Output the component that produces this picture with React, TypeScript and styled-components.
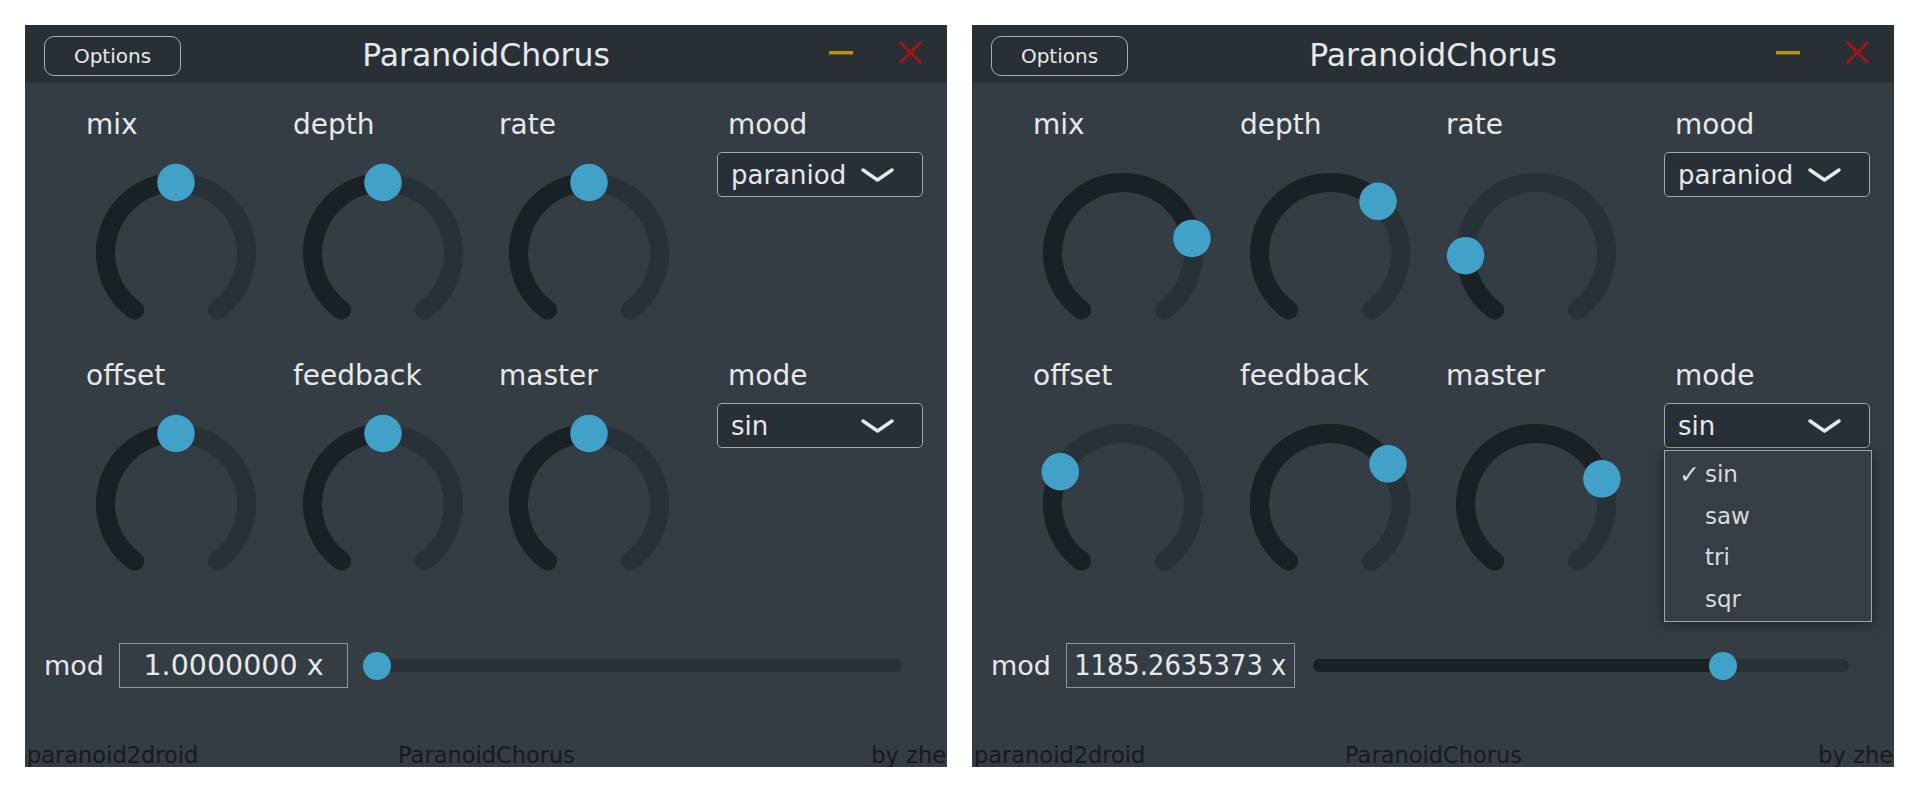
import React from 'react';
import styled, { createGlobalStyle } from 'styled-components';

const GlobalStyle = createGlobalStyle`
  html, body {
    margin: 0;
    padding: 0;
    background: #ffffff;
  }
  body {
    font-family: "DejaVu Sans", "Liberation Sans", sans-serif;
  }
`;

const Page = styled.div`
  display: flex;
  gap: 25px;
  padding: 25px;
  width: 1920px;
  height: 792px;
  box-sizing: border-box;
  background: #ffffff;
`;

const Panel = styled.div`
  width: 922px;
  height: 742px;
  flex: none;
  display: flex;
  flex-direction: column;
  background: #343d44;
  color: #e6e8ea;
  overflow: hidden;
`;

const TitleBar = styled.div`
  height: 58px;
  flex: none;
  display: grid;
  grid-template-columns: 1fr auto 1fr;
  align-items: center;
  padding: 0 19px;
  background: #283036;
`;

const OptionsButton = styled.button`
  justify-self: start;
  width: 137px;
  height: 40px;
  margin-top: 4px;
  border: 1.5px solid #a9b0b4;
  border-radius: 10px;
  background: transparent;
  color: #e6e8ea;
  font-family: "DejaVu Sans", sans-serif;
  font-size: 20px;
  padding: 0;
`;

const Title = styled.div`
  height: 58px;
  box-sizing: border-box;
  padding-top: 3px;
  font-size: 31.5px;
  line-height: 55px;
  white-space: nowrap;
`;

const WindowButtons = styled.div`
  justify-self: end;
  display: flex;
  align-items: center;
  gap: 46px;
  padding-right: 6px;
  margin-bottom: 3px;
`;

const Controls = styled.div`
  display: grid;
  grid-template-columns: 207px 206px 207px 1fr;
  grid-auto-rows: 235px;
  row-gap: 16px;
  padding: 25px 0 0 61px;
`;

const Cell = styled.div<{ $indent?: number }>`
  display: flex;
  flex-direction: column;
  align-items: flex-start;
  padding-left: ${p => p.$indent ?? 0}px;
`;

const Label = styled.div<{ $indent?: number }>`
  height: 34px;
  font-size: 28px;
  line-height: 34px;
  margin-left: ${p => p.$indent ?? 0}px;
  white-space: nowrap;
`;

const KnobSvg = styled.svg`
  display: block;
  margin-top: 21px;
`;

const ComboWrap = styled.div`
  position: relative;
  margin-top: 10px;
`;

const Combo = styled.div`
  width: 206px;
  height: 45px;
  box-sizing: border-box;
  display: flex;
  align-items: center;
  justify-content: space-between;
  padding: 0 28px 0 13px;
  border: 1.5px solid #a3aaaf;
  border-radius: 5px;
  background: #273036;
  font-size: 26px;
`;

const Menu = styled.div`
  position: absolute;
  top: calc(100% + 2px);
  left: 0;
  width: 208px;
  box-sizing: border-box;
  padding: 3px 0 1px;
  border: 1.5px solid #a0a7ab;
  background: #353e45;
  box-shadow: 0 2px 12px rgba(0, 0, 0, 0.45);
  z-index: 2;
`;

const MenuItem = styled.div`
  display: grid;
  grid-template-columns: 26px 1fr;
  padding-left: 14px;
  height: 41.5px;
  font-size: 23px;
  line-height: 41.5px;
  color: #d8dcdf;
`;

const Check = styled.span`
  font-size: 25px;
  font-weight: bold;
`;

const ModRow = styled.div`
  display: flex;
  align-items: center;
  height: 45px;
  margin-top: 49px;
  padding-left: 19px;
`;

const ModLabel = styled.div`
  width: 75px;
  font-size: 27px;
  line-height: 45px;
`;

const ValueBox = styled.div`
  width: 229px;
  height: 45px;
  box-sizing: border-box;
  display: flex;
  align-items: center;
  justify-content: center;
  border: 1.5px solid #8e979c;
  overflow: hidden;
  white-space: nowrap;
`;

const ValueText = styled.span<{ $squeeze: number }>`
  display: inline-block;
  font-size: 28.5px;
  transform: scaleX(${p => p.$squeeze});
`;

const Slider = styled.div`
  width: 536px;
  height: 28px;
  margin-left: 18px;
  display: flex;
  align-items: center;
`;

const Track = styled.div`
  position: relative;
  width: 100%;
  height: 13px;
  border-radius: 7px;
  background: #283137;
`;

const TrackFill = styled.div`
  position: absolute;
  left: 0;
  top: 0;
  bottom: 0;
  border-radius: 7px;
  background: #1a2125;
`;

const Thumb = styled.div`
  position: absolute;
  top: 50%;
  width: 28px;
  height: 28px;
  border-radius: 50%;
  background: #42a1c9;
  transform: translate(-50%, -50%);
`;

const Footer = styled.div`
  margin-top: auto;
  height: 25px;
  flex: none;
  display: grid;
  grid-template-columns: 1fr auto 1fr;
  padding: 0 1px 0 2px;
  font-size: 22.5px;
  line-height: 26px;
  color: #161b1e;
  overflow: hidden;
  white-space: nowrap;
`;

const FooterRight = styled.span`
  justify-self: end;
`;

const C = 90;
const R = 70.5;

const polar = (deg: number) => {
  const a = (deg * Math.PI) / 180;
  return [C + R * Math.sin(a), C - R * Math.cos(a)];
};

const arc = (from: number, to: number) => {
  const [x1, y1] = polar(from);
  const [x2, y2] = polar(to);
  const large = to - from > 180 ? 1 : 0;
  return `M ${x1} ${y1} A ${R} ${R} 0 ${large} 1 ${x2} ${y2}`;
};

const Knob = ({ value }: { value: number }) => {
  const angle = -144 + value * 288;
  const [dx, dy] = polar(angle);
  return (
    <KnobSvg width={180} height={180} viewBox="0 0 180 180">
      <path d={arc(-144, 144)} fill="none" stroke="#283137" strokeWidth={19} strokeLinecap="round" />
      {value > 0.002 && (
        <path d={arc(-144, angle)} fill="none" stroke="#1a2125" strokeWidth={19} strokeLinecap="round" />
      )}
      <circle cx={dx} cy={dy} r={18.75} fill="#42a1c9" />
    </KnobSvg>
  );
};

const Chevron = () => (
  <svg width={33} height={14} viewBox="0 0 33 14">
    <polyline points="2,2 16.5,12 31,2" fill="none" stroke="#e6e8ea" strokeWidth={3.4} strokeLinecap="round" strokeLinejoin="round" />
  </svg>
);

const MinimiseIcon = () => (
  <svg width={24} height={4} viewBox="0 0 24 4">
    <rect x={0} y={0} width={24} height={3.5} fill="#b8940c" />
  </svg>
);

const CloseIcon = () => (
  <svg width={23} height={23} viewBox="0 0 23 23">
    <line x1={1} y1={1} x2={22} y2={22} stroke="#a3141b" strokeWidth={3} />
    <line x1={22} y1={1} x2={1} y2={22} stroke="#a3141b" strokeWidth={3} />
  </svg>
);

interface IPanel {
  knobs: number[];
  mod: string;
  squeeze: number;
  slider: number;
  menuOpen?: boolean;
}

const knobNames = [['mix', 'depth', 'rate'], ['offset', 'feedback', 'master']];
const waves = ['sin', 'saw', 'tri', 'sqr'];

const ChorusPanel = ({ knobs, mod, squeeze, slider, menuOpen }: IPanel) => {
  const thumbX = 11 + slider * 514;
  return (
    <Panel>
      <TitleBar>
        <OptionsButton>Options</OptionsButton>
        <Title>ParanoidChorus</Title>
        <WindowButtons>
          <MinimiseIcon />
          <CloseIcon />
        </WindowButtons>
      </TitleBar>
      <Controls>
        {knobNames.map((row, r) => (
          <React.Fragment key={r}>
            {row.map((name, i) => (
              <Cell key={name}>
                <Label>{name}</Label>
                <Knob value={knobs[r * 3 + i]} />
              </Cell>
            ))}
            <Cell $indent={11}>
              <Label $indent={11}>{r === 0 ? 'mood' : 'mode'}</Label>
              <ComboWrap>
                <Combo>
                  <span>{r === 0 ? 'paraniod' : 'sin'}</span>
                  <Chevron />
                </Combo>
                {r === 1 && menuOpen && (
                  <Menu>
                    {waves.map((w, i) => (
                      <MenuItem key={w}>
                        <Check>{i === 0 ? '\u2713' : ''}</Check>
                        <span>{w}</span>
                      </MenuItem>
                    ))}
                  </Menu>
                )}
              </ComboWrap>
            </Cell>
          </React.Fragment>
        ))}
      </Controls>
      <ModRow>
        <ModLabel>mod</ModLabel>
        <ValueBox>
          <ValueText $squeeze={squeeze}>{mod}</ValueText>
        </ValueBox>
        <Slider>
          <Track>
            <TrackFill style={{ width: thumbX }} />
            <Thumb style={{ left: thumbX }} />
          </Track>
        </Slider>
      </ModRow>
      <Footer>
        <span>paranoid2droid</span>
        <span>ParanoidChorus</span>
        <FooterRight>by zhe</FooterRight>
      </Footer>
    </Panel>
  );
};

const App = () => (
  <>
    <GlobalStyle />
    <Page>
      <ChorusPanel knobs={[0.5, 0.5, 0.5, 0.5, 0.5, 0.5]} mod="1.0000000 x" squeeze={1} slider={0} />
      <ChorusPanel
        knobs={[0.771, 0.649, 0.18, 0.282, 0.692, 0.74]}
        mod="1185.2635373 x"
        squeeze={0.905}
        slider={0.776}
        menuOpen
      />
    </Page>
  </>
);

export default App;
